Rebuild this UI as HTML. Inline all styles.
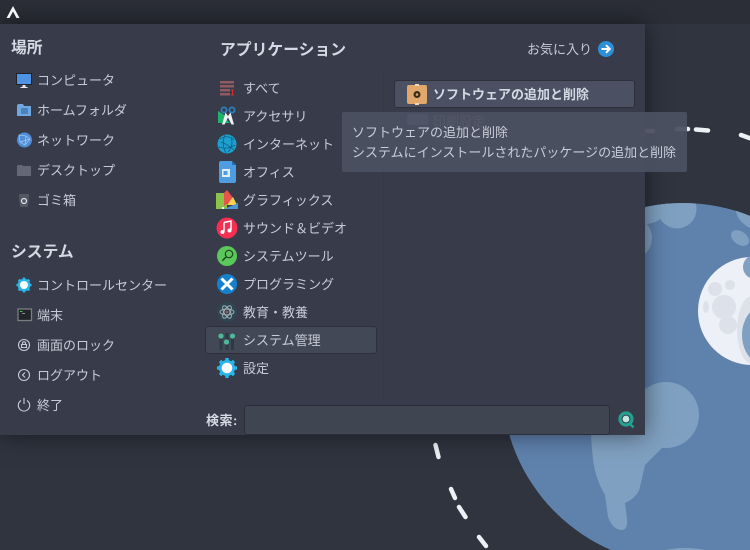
<!DOCTYPE html>
<html><head><meta charset="utf-8"><style>
html,body{margin:0;padding:0;background:#2f343f}
#r{position:relative;width:750px;height:550px;overflow:hidden;background:#2f343f;font-family:"Liberation Sans","Noto Sans CJK JP",sans-serif;font-size:13px;color:#c6ccd7}
svg{position:absolute;left:0;top:0}
.bar{position:absolute;left:0;top:0;width:750px;height:24px;background:#2b2e37}
.panel{position:absolute;left:0;top:24px;width:645px;height:411px;background:#383c4a;box-shadow:0 0 22px rgba(0,0,0,.5)}
.sel{position:absolute;left:205px;top:326px;width:170px;height:26px;background:#434856;border:1px solid #2d303b;border-radius:3px}
.btn{position:absolute;left:394px;top:80px;width:239px;height:26px;background:#4b5162;border:1px solid #2d303b;border-radius:3px}
.inp{position:absolute;left:244px;top:405px;width:364px;height:28px;background:#404552;border:1px solid #2b2e39;border-radius:3px}
.tip{position:absolute;left:342px;top:112px;width:345px;height:60px;background:rgba(75,81,98,.94);border-radius:2px}
.t{position:absolute;height:20px;line-height:20px;white-space:nowrap}
.h{font-size:15.8px;font-weight:700;color:#d3dae3}
.b{font-weight:700;color:#d3dae3}
</style></head><body><div id="r">
<svg width="750" height="550" viewBox="0 0 750 550">
<defs><clipPath id="g"><circle cx="683" cy="384" r="181"/></clipPath></defs>
<circle cx="683" cy="384" r="181" fill="#5f82ad"/>
<g clip-path="url(#g)" fill="#7fa0c0">
<circle cx="677" cy="209" r="19.500"/><circle cx="645" cy="198" r="26"/><circle cx="630" cy="238" r="22"/>
<ellipse cx="740" cy="238" rx="10" ry="6.500" transform="rotate(35 740 238)"/><circle cx="760" cy="205" r="25"/>
<circle cx="666" cy="415" r="33"/>
<path d="M591 437L593 460Q596 480 605 495L608 517Q613 530 622 530Q628 530 627 518L625 503Q638 497 640 487L645 465L663 447L670 425L640 380L600 400Z"/>
<ellipse cx="685" cy="556" rx="30" ry="8"/>
</g>
<circle cx="752" cy="311" r="54" fill="#edf0f6"/>
<g fill="#dde1ea"><circle cx="715" cy="289" r="7"/><circle cx="730" cy="285" r="5"/><ellipse cx="706" cy="307" rx="3" ry="6"/><circle cx="724" cy="307" r="12"/><circle cx="728" cy="325" r="9"/><ellipse cx="752" cy="330" rx="15" ry="34"/></g>
<ellipse cx="767" cy="335" rx="25" ry="31" fill="#7fa0c0"/><circle cx="755" cy="267" r="12" fill="#7fa0c0"/>
<g stroke="#edf0f4" stroke-width="4.500" stroke-linecap="round" fill="none">
<path d="M435.500 445L438.500 457"/><path d="M451 489L455 498"/><path d="M459 507L465.500 517"/><path d="M479 537L486 546"/>
<path d="M696 129.500L708 130.500"/><path d="M741 135L752 139"/><path d="M677 129L688 129"/><path d="M646 131L653 131"/>
</g>
</svg>
<div class="bar"></div>
<div class="panel"></div>
<div style="position:absolute;left:383px;top:70px;width:1px;height:330px;background:#353945"></div>
<div class="sel"></div><div class="btn"></div><div class="inp"></div>
<svg width="750" height="550" viewBox="0 0 750 550">
<path d="M13 6L19.500 18H16.500L13 11.500L9.500 18H6.500Z" fill="#f4f5f7"/>
<!-- left -->
<rect x="16" y="73" width="16" height="12" fill="#1f2229"/><rect x="17" y="74" width="14" height="10" fill="#4f93e4"/><path d="M22.500 85h3v2h2v1h-7v-1h2z" fill="#e8eaee"/>
<path d="M17 106q0-2 2-2h4l1 2h7v10H17z" fill="#6fa8e0"/><rect x="21" y="108" width="7" height="6" rx="1" fill="#4a82bf"/>
<circle cx="24.500" cy="140" r="7.500" fill="#4f8edb"/><path d="M19 135l7 1 4 3-5 6-5-3zM26 136l-1 9M20 142l10-3" stroke="#a9c8ee" stroke-width=".7" fill="none"/>
<path d="M17 166q0-1 1-1h4l1 1h8v10H17z" fill="#626875"/>
<path d="M19 194h10v2l-1 11h-8l-1-11z" fill="#525763"/><circle cx="24" cy="201" r="2.500" fill="none" stroke="#dfe2e8" stroke-width="1.200"/>
<circle cx="24" cy="285" r="6.300" fill="#29b6e8"/><path d="M24 277.500v15M16.500 285h15M18.700 279.700l10.600 10.600M29.300 279.700l-10.600 10.600" stroke="#29b6e8" stroke-width="2.600"/><circle cx="24" cy="285" r="4" fill="#fff"/>
<rect x="18" y="309" width="13.500" height="11.500" fill="#22252a" stroke="#7a7d82" stroke-width="1.300"/><rect x="20" y="311" width="2.500" height="1" fill="#4fc04f"/><rect x="22" y="313" width="3" height="1" fill="#8a8f96"/>
<g fill="none" stroke="#c6ccd7" stroke-width="1.100"><circle cx="24" cy="345" r="5.500"/><path d="M21.500 344.500h5v3h-5zM22.500 344.500v-1.200a1.500 1.500 0 013 0v1.200"/><circle cx="24" cy="375" r="5.500"/><path d="M25 372.500l-2.500 2.500 2.500 2.500"/><path d="M21 400.500a5.700 5.700 0 106 0M24 398v6"/></g>
<!-- middle -->
<path d="M220 81h14v2.500h-14zM220 85h14v2.500h-14zM220 89h10v2.500h-10zM220 93h10v2.500h-10z" fill="#8f5a60"/><path d="M231 90h3M232.500 90v5M231 95h3" stroke="#e8262c" stroke-width="1" fill="none"/>
<path d="M218 111l8 5v7h-8z" fill="#1fb26b"/><path d="M218 123l6-6 6 6z" fill="#1fb26b"/><circle cx="224" cy="110" r="2.600" fill="none" stroke="#2d7fc0" stroke-width="1.800"/><circle cx="232" cy="110" r="2.600" fill="none" stroke="#2d7fc0" stroke-width="1.800"/>
<path d="M225.500 112.500l-3.500 12h2.500l3.500-7 3.500 7h2.500l-3.500-12L228 116z" fill="#eef1f4"/>
<circle cx="227" cy="144" r="9.500" fill="#1d9fcf"/><g fill="none" stroke="#0f5f85" stroke-width=".8"><path d="M220 139q8-5 14 1M219 147q9 3 16-2M225 135q-4 9 1 18M231 137q3 8-3 15M221 142q6 2 13 8"/></g>
<path d="M219 163q0-2 2-2h11l4 4v16q0 2-2 2h-13q-2 0-2-2z" fill="#4d9de0"/><path d="M232 161l4 4h-4z" fill="#1f6fb5"/><rect x="222" y="169" width="8" height="8" fill="#dfeefa"/><rect x="223.500" y="171" width="4" height="4" fill="#4d9de0"/>
<rect x="216" y="193" width="11" height="16" fill="#8bc34a"/><path d="M224 193l3-3 7 9-10 7z" fill="#e8534a"/><path d="M227 205l6-8 4 8z" fill="#ffd54f"/><path d="M224 209l14-6v6z" fill="#4f9ad6"/><rect x="222" y="207" width="2" height="2" fill="#fff"/>
<circle cx="227" cy="228" r="10.500" fill="#f52f52"/><path d="M224 222.500l7-1.500v9" fill="none" stroke="#fff" stroke-width="1.500"/><path d="M224 222.500v9" stroke="#fff" stroke-width="1.500"/><circle cx="222.500" cy="232" r="2" fill="#fff"/><circle cx="229.500" cy="230.500" r="2" fill="#fff"/>
<circle cx="227" cy="256" r="10" fill="#5ac85a"/><circle cx="229" cy="254" r="3.700" fill="none" stroke="#21431f" stroke-width="1.200"/><path d="M226.300 256.700l-4 4" stroke="#21431f" stroke-width="1.400"/>
<circle cx="227" cy="284" r="10" fill="#1581cc"/><path d="M221.500 278.500l11 11M232.500 278.500l-11 11" stroke="#fff" stroke-width="3"/>
<circle cx="227" cy="312" r="10" fill="#2f4650"/><g fill="none" stroke="#a5b4bb" stroke-width=".9"><ellipse cx="227" cy="312" rx="7" ry="3"/><ellipse cx="227" cy="312" rx="7" ry="3" transform="rotate(60 227 312)"/><ellipse cx="227" cy="312" rx="7" ry="3" transform="rotate(120 227 312)"/></g><circle cx="227" cy="312" r="1.400" fill="#a0525a"/>
<g stroke="#2c3a46" stroke-width="3"><path d="M221 333v17M227 333v17M232.500 333v17"/></g><circle cx="221" cy="336" r="2.600" fill="#4fb89a"/><circle cx="226.500" cy="342" r="2.600" fill="#4fb89a"/><circle cx="232.500" cy="336" r="2.600" fill="#4fb89a"/>
<circle cx="227" cy="368" r="8" fill="#29b6e8"/><path d="M227 358v20M217 368h20M220 361l14 14M234 361l-14 14" stroke="#29b6e8" stroke-width="3.400"/><circle cx="227" cy="368" r="5.300" fill="#fff"/>
<!-- right -->
<circle cx="606" cy="49" r="8" fill="#2e8fd9"/><path d="M601.500 49h8M606 45.200l3.800 3.800-3.800 3.800" fill="none" stroke="#fff" stroke-width="2"/>
<rect x="407" y="85" width="20" height="19" rx="2" fill="#e0a86c"/><rect x="415" y="84" width="4" height="2" fill="#f3d6b2"/><rect x="415" y="103" width="4" height="2" fill="#f3d6b2"/><circle cx="417" cy="94.500" r="3.500" fill="#3a2c1c"/><circle cx="417" cy="94.500" r="1.300" fill="#e0a86c"/>
<circle cx="626" cy="419" r="6" fill="none" stroke="#23a08f" stroke-width="3.200"/><circle cx="626" cy="419" r="3.400" fill="#bfe8e0"/><path d="M630 424l3.500 3.500" stroke="#23a08f" stroke-width="2.600"/>
<rect x="407" y="114" width="21" height="11" rx="2" fill="#7f93ac"/>
</svg>
<div class="t h" style="left:11px;top:39px">場所</div>
<div class="t" style="left:37px;top:71px">コンピュータ</div>
<div class="t" style="left:37px;top:101px">ホームフォルダ</div>
<div class="t" style="left:37px;top:131px">ネットワーク</div>
<div class="t" style="left:37px;top:161px">デスクトップ</div>
<div class="t" style="left:37px;top:191px">ゴミ箱</div>
<div class="t h" style="left:11px;top:243px">システム</div>
<div class="t" style="left:37px;top:276px">コントロールセンター</div>
<div class="t" style="left:37px;top:306px">端末</div>
<div class="t" style="left:37px;top:336px">画面のロック</div>
<div class="t" style="left:37px;top:366px">ログアウト</div>
<div class="t" style="left:37px;top:396px">終了</div>
<div class="t h" style="left:220px;top:41px">アプリケーション</div>
<div class="t" style="left:527px;top:40px">お気に入り</div>
<div class="t" style="left:243px;top:79px">すべて</div>
<div class="t" style="left:243px;top:107px">アクセサリ</div>
<div class="t" style="left:243px;top:135px">インターネット</div>
<div class="t" style="left:243px;top:163px">オフィス</div>
<div class="t" style="left:243px;top:191px">グラフィックス</div>
<div class="t" style="left:243px;top:219px">サウンド＆ビデオ</div>
<div class="t" style="left:243px;top:247px">システムツール</div>
<div class="t" style="left:243px;top:275px">プログラミング</div>
<div class="t" style="left:243px;top:303px">教育・教養</div>
<div class="t" style="left:243px;top:331px">システム管理</div>
<div class="t" style="left:243px;top:359px">設定</div>
<div class="t b" style="left:433px;top:85px">ソフトウェアの追加と削除</div>
<div class="t" style="left:433px;top:112px">印刷設定</div>
<div class="t b" style="left:206px;top:411px;letter-spacing:.5px">検索:</div>
<div class="tip"></div>
<div class="t" style="left:352px;top:123px">ソフトウェアの追加と削除</div>
<div class="t" style="left:352px;top:143px">システムにインストールされたパッケージの追加と削除</div>
</div></body></html>
